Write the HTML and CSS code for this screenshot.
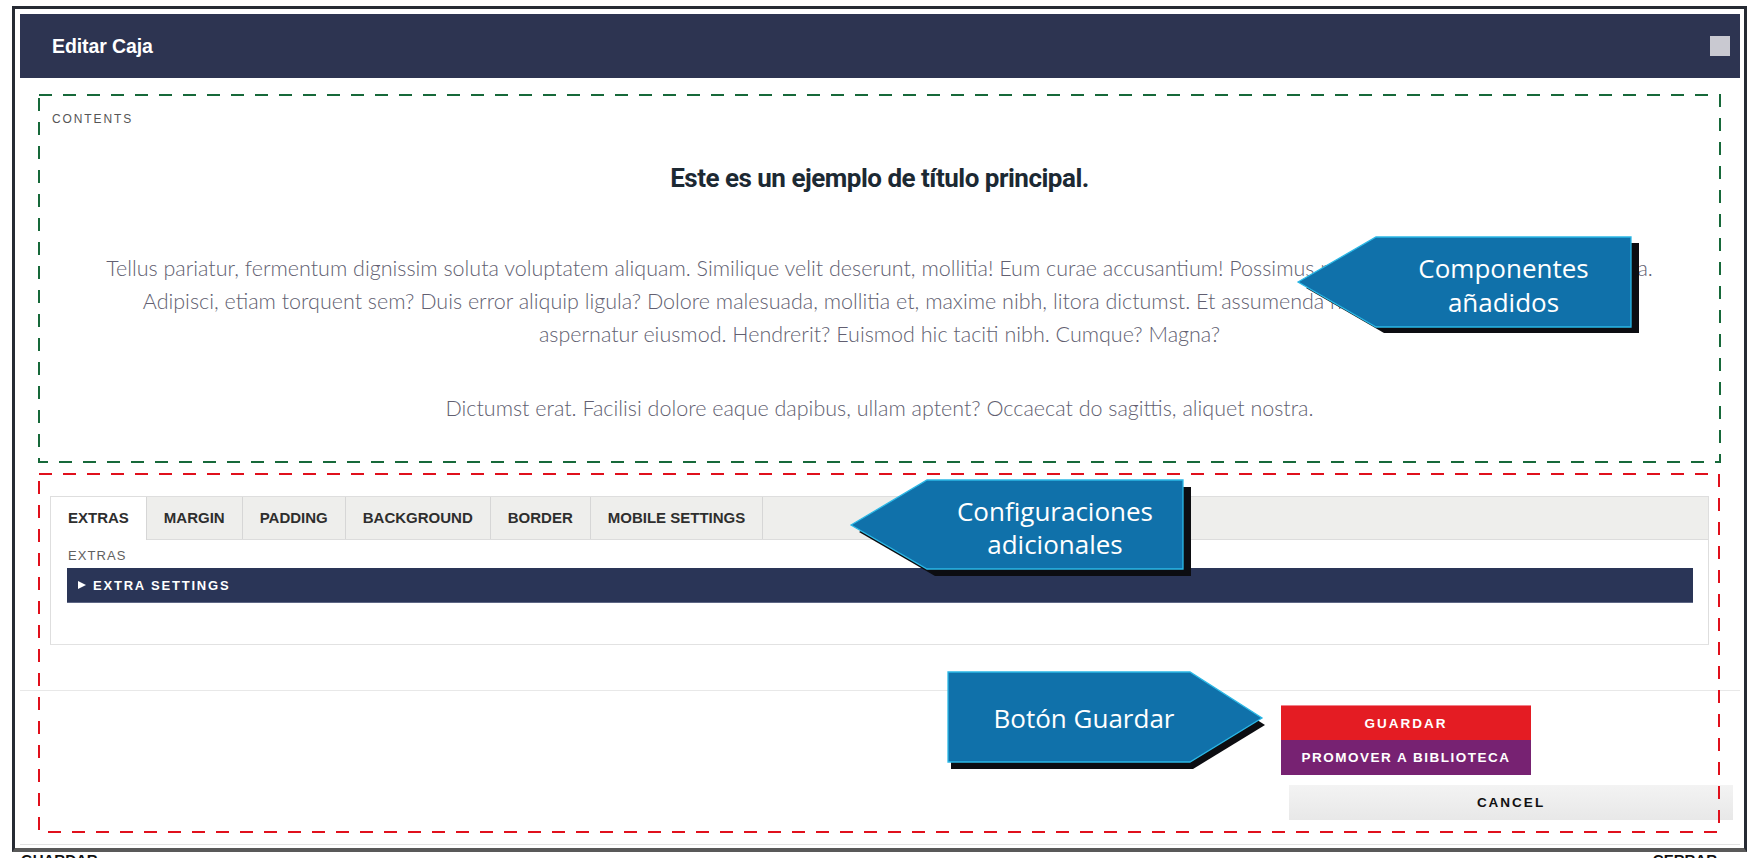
FILE: index.html
```html
<!DOCTYPE html>
<html lang="es">
<head>
<meta charset="utf-8">
<title>Editar Caja</title>
<link rel="stylesheet" href="styles.css">
</head>
<body>
<div class="page">
  <div class="frame">
    <div class="modal">
      <header class="modal-header">
        <h1 class="modal-title">Editar Caja</h1>
        <span class="close-btn"></span>
      </header>
      <div class="modal-body">
        <div class="field-label">CONTENTS</div>
        <h2 class="main-title">Este es un ejemplo de título principal.</h2>
        <p class="lead">Tellus pariatur, fermentum dignissim soluta voluptatem aliquam. Similique velit deserunt, mollitia! Eum curae accusantium! Possimus nostrud, quibusdam iaculis a magna.<br>Adipisci, etiam torquent sem? Duis error aliquip ligula? Dolore malesuada, mollitia et, maxime nibh, litora dictumst. Et assumenda nostrum, ullamco quasi eveniet<br>aspernatur eiusmod. Hendrerit? Euismod hic taciti nibh. Cumque? Magna?</p>
        <p class="lead">Dictumst erat. Facilisi dolore eaque dapibus, ullam aptent? Occaecat do sagittis, aliquet nostra.</p>
        <div class="tabs">
          <div class="tab-bar">
            <div class="tab active">EXTRAS</div>
            <div class="tab">MARGIN</div>
            <div class="tab">PADDING</div>
            <div class="tab">BACKGROUND</div>
            <div class="tab">BORDER</div>
            <div class="tab">MOBILE SETTINGS</div>
          </div>
          <div class="tab-panel">
            <div class="panel-label">EXTRAS</div>
            <div class="accordion"><span class="tri"></span>EXTRA SETTINGS</div>
          </div>
        </div>
      </div>
      <footer class="modal-footer">
        <div class="primary-actions">
          <button class="btn btn-save">GUARDAR</button>
          <button class="btn btn-promote">PROMOVER A BIBLIOTECA</button>
        </div>
        <button class="btn btn-cancel">CANCEL</button>
      </footer>
    </div>
  </div>
  <div class="underlay"><span>GUARDAR</span><span>CERRAR</span></div>

  <svg class="annotations" width="1760" height="858" viewBox="0 0 1760 858">
    <rect x="39" y="95" width="1681" height="367" fill="none" stroke="#17693a" stroke-width="2" stroke-dasharray="13 11"/>
    <rect x="39" y="474" width="1680" height="358" fill="none" stroke="#e0101c" stroke-width="2" stroke-dasharray="13 11"/>
    <polygon points="1306,288 1384,243 1639,243 1639,333 1384,333" fill="#0c0d11"/>
    <polygon points="1298,282 1376,237 1631,237 1631,327 1376,327" fill="#1071aa" stroke="#2bb8e6" stroke-width="1.3"/>
    <polygon points="859,532 935,487 1191,487 1191,576 935,576" fill="#0c0d11"/>
    <polygon points="851,525 927,480 1183,480 1183,569 927,569" fill="#1071aa" stroke="#2bb8e6" stroke-width="1.3"/>
    <polygon points="951,679 1193,679 1265,725 1193,769 951,769" fill="#0c0d11"/>
    <polygon points="948,672 1190,672 1262,718 1190,762 948,762" fill="#1071aa" stroke="#2bb8e6" stroke-width="1.3"/>
  </svg>
  <div class="callout-text c1">Componentes<br>añadidos</div>
  <div class="callout-text c2">Configuraciones<br>adicionales</div>
  <div class="callout-text c3">Botón Guardar</div>
</div>
</body>
</html>
```

FILE: styles.css
```css
* { box-sizing: border-box; }

body {
  margin: 0;
  background: #ffffff;
  font-family: "Liberation Sans", Arial, sans-serif;
}

.page {
  position: relative;
  width: 1760px;
  height: 858px;
  overflow: hidden;
  background: #ffffff;
}

.frame {
  position: relative;
  z-index: 1;
  margin: 6px 0 0 12px;
  width: 1735px;
  border: 3px solid #262a33;
  border-bottom: 4px solid #595959;
  padding: 5px 4px 3px 5px;
  background: #ffffff;
}

.modal-header {
  height: 64px;
  background: #2d3451;
  display: flex;
  align-items: center;
  justify-content: space-between;
  padding: 0 10px 0 32px;
}

.modal-title {
  margin: 0;
  color: #ffffff;
  font-size: 19.5px;
  font-weight: 700;
  letter-spacing: -0.1px;
}

.close-btn {
  width: 20px;
  height: 20px;
  background: #c9c9d1;
}

.modal-body {
  padding: 33px 31px 0 30px;
}

.field-label {
  font-size: 12px;
  line-height: 16px;
  letter-spacing: 1.9px;
  color: #555555;
  padding-left: 2px;
}

.main-title {
  margin: 33px 0 0;
  text-align: center;
  font-family: Roboto, "Liberation Sans", sans-serif;
  font-weight: 700;
  font-size: 26px;
  line-height: 36px;
  letter-spacing: -0.5px;
  color: #1c2933;
}

.lead {
  margin: 55.5px 0 0;
  text-align: center;
  font-family: Lato, "Open Sans", sans-serif;
  font-weight: 300;
  font-size: 21.5px;
  line-height: 33px;
  color: #625f71;
}

.lead + .lead {
  margin-top: 41px;
}

.tabs {
  margin-top: 71.5px;
  border: 1px solid #dedede;
  border-bottom-color: #e2e2e2;
}

.tab-bar {
  display: flex;
  height: 43px;
  background: #eeeeec;
  border-bottom: 1px solid #dcdcdc;
}

.tab {
  padding: 0 17px;
  font-size: 15px;
  font-weight: 700;
  line-height: 42px;
  color: #2e2e2e;
  border-right: 1px solid #d6d6d6;
}

.tab.active {
  background: #ffffff;
  height: 43px;
}

.tab-panel {
  padding: 8px 15px 41px 16px;
}

.panel-label {
  font-size: 13px;
  line-height: 16px;
  letter-spacing: 1.1px;
  color: #606060;
  padding-left: 1px;
}

.accordion {
  margin-top: 4px;
  height: 35px;
  background: #2a3557;
  border-bottom: 1px solid #5d6684;
  color: #ffffff;
  display: flex;
  align-items: center;
  padding-left: 11px;
  font-size: 13px;
  font-weight: 700;
  letter-spacing: 1.8px;
}

.tri {
  width: 0;
  height: 0;
  border-left: 8px solid #ffffff;
  border-top: 4.5px solid transparent;
  border-bottom: 4.5px solid transparent;
  margin-right: 7px;
}

.modal-footer {
  margin-top: 45px;
  border-top: 1px solid #e8e8e8;
  border-bottom: 1px solid #e2e2e2;
  padding: 14px 7px 24px 0;
  display: flex;
  flex-direction: column;
  align-items: flex-end;
}

.primary-actions {
  width: 250px;
  margin-right: 202px;
}

.btn {
  display: block;
  width: 100%;
  height: 35px;
  border: 0;
  padding: 0;
  font-family: "Liberation Sans", Arial, sans-serif;
  font-size: 13.5px;
  font-weight: 700;
  letter-spacing: 2px;
  color: #ffffff;
  text-align: center;
}

.btn-save {
  background: #e41c23;
  border-top: 1px solid #f0808a;
}

.btn-promote {
  background: #772272;
  letter-spacing: 1.5px;
}

.btn-cancel {
  width: 444px;
  margin-top: 10px;
  background: linear-gradient(#f3f3f3, #e8e8e8);
  color: #111111;
}

.underlay {
  position: absolute;
  left: 0;
  top: 853px;
  width: 1760px;
  height: 5px;
  overflow: hidden;
  display: flex;
  justify-content: space-between;
  padding: 0 43px 0 21px;
  font-size: 15px;
  font-weight: 700;
  line-height: 14px;
  color: #111111;
}

.annotations {
  position: absolute;
  left: 0;
  top: 0;
  z-index: 2;
  pointer-events: none;
}

.callout-text {
  position: absolute;
  z-index: 3;
  color: #ffffff;
  font-family: "Open Sans", "Noto Sans", sans-serif;
  font-size: 26px;
  line-height: 34px;
  text-align: center;
  white-space: nowrap;
}

.c1 {
  left: 1376px;
  top: 251px;
  width: 255px;
}

.c2 {
  left: 927px;
  top: 495px;
  width: 256px;
  line-height: 33px;
}

.c3 {
  left: 948px;
  top: 701px;
  width: 242px;
  padding-left: 30px;
}
```
